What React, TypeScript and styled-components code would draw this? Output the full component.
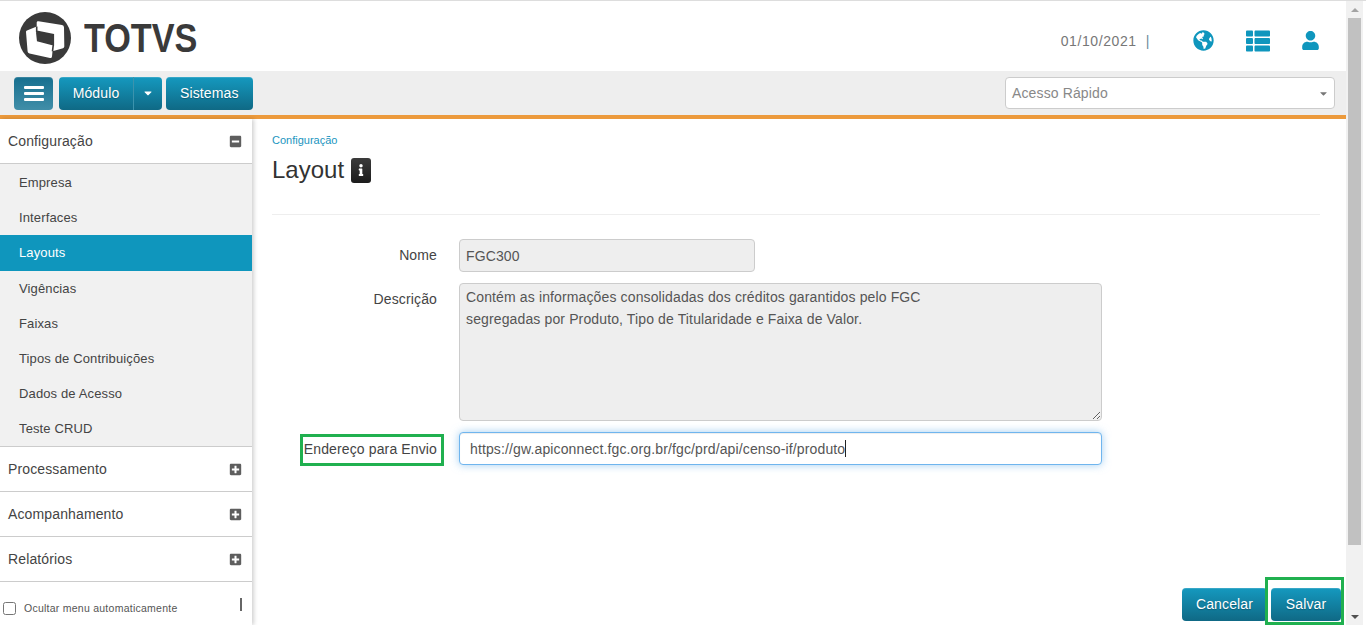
import * as React from 'react';
import styled, { createGlobalStyle } from 'styled-components';
import { FaGlobeAmericas, FaThList, FaUser, FaInfo, FaPlusSquare, FaMinusSquare, FaCaretDown } from 'react-icons/fa';

const GlobalStyle = createGlobalStyle`
  html, body {
    margin: 0;
    padding: 0;
    height: 100%;
    overflow: hidden;
    background: #fff;
  }
  * { box-sizing: border-box; }
  body {
    font-family: "Liberation Sans", Arial, sans-serif;
    font-size: 14px;
    letter-spacing: 0.13px;
    color: #333;
  }
`;

const Page = styled.div`
  display: flex;
  height: 625px;
  width: 1366px;
  border-top: 1px solid #ddd;
  overflow: hidden;
`;

const Main = styled.div`
  flex: 0 0 1346px;
  display: flex;
  flex-direction: column;
  min-width: 0;
`;

const Header = styled.header`
  flex: 0 0 70px;
  display: flex;
  align-items: center;
  justify-content: space-between;
  padding: 4px 26px 0 19px;
  background: #fff;
`;

const Logo = styled.div`
  display: flex;
  align-items: center;
  gap: 13px;
`;

const LogoText = styled.span`
  display: inline-block;
  width: 114px;
  font-size: 40px;
  line-height: 40px;
  font-weight: 700;
  letter-spacing: 0;
  color: #3a3a3a;
  transform: scaleX(0.855);
  transform-origin: left center;
  white-space: nowrap;
`;

const HeaderRight = styled.div`
  display: flex;
  align-items: center;
  margin-top: 5px;
`;

const DateText = styled.span`
  font-size: 14px;
  color: #777;
  letter-spacing: 0.6px;
  margin-right: 43px;

  &::after {
    content: '|';
    margin-left: 9px;
    color: #6d8a99;
  }
`;

const IconLink = styled.span`
  display: flex;
  color: #0f96bd;
  margin-left: ${(p: { $gap?: number }) => p.$gap ?? 0}px;
`;

const Toolbar = styled.div`
  flex: 0 0 44px;
  display: flex;
  align-items: center;
  justify-content: space-between;
  padding: 0 11px 0 14px;
  background: #eee;
`;

const ToolGroup = styled.div`
  display: flex;
  gap: 4px;
`;

const Button = styled.button`
  height: 33px;
  padding: 0 14px;
  border: 0;
  border-radius: 4px;
  font-family: inherit;
  font-size: 14px;
  letter-spacing: inherit;
  color: #fff;
  text-shadow: 0 1px 1px rgba(0, 0, 0, 0.25);
  background: linear-gradient(to bottom, #1599bf, #0f6985);
  box-shadow: inset 0 1px 0 rgba(255, 255, 255, 0.15);
`;

const MenuButton = styled(Button)`
  width: 39px;
  padding: 0;
  margin-right: 2px;
  display: flex;
  flex-direction: column;
  align-items: center;
  justify-content: center;
  gap: 3px;
  background: linear-gradient(to bottom, #166f8f, #418ea8);

  span {
    width: 20px;
    height: 3px;
    border-radius: 1px;
    background: #fff;
  }
`;

const SplitButton = styled.div`
  display: flex;
  border-radius: 4px;
  overflow: hidden;
`;

const SplitMain = styled(Button)`
  width: 75px;
  padding: 0;
  border-radius: 0;
  border-right: 1px solid #3c93ad;
`;

const SplitCaret = styled(Button)`
  width: 28px;
  padding: 0;
  border-radius: 0;
  display: flex;
  align-items: center;
  justify-content: center;
`;

const QuickAccess = styled.div`
  width: 330px;
  height: 32px;
  display: flex;
  align-items: center;
  justify-content: space-between;
  padding: 0 5px 0 6px;
  border: 1px solid #ccc;
  border-radius: 4px;
  background: #fff;
  color: #888;
  font-size: 14px;

  svg { color: #777; }
`;

const OrangeBar = styled.div`
  flex: 0 0 4px;
  background: #ec9a3c;
`;

const Body = styled.div`
  flex: 1;
  display: flex;
  min-height: 0;
`;

const Sidebar = styled.aside`
  flex: 0 0 252px;
  display: flex;
  flex-direction: column;
  background: #fff;
  box-shadow: 2px 0 4px rgba(0, 0, 0, 0.18);
  z-index: 1;
`;

const SectionHeader = styled.div`
  flex: 0 0 45px;
  display: flex;
  align-items: center;
  justify-content: space-between;
  padding: 0 10px 0 8px;
  border-bottom: 1px solid #ccc;
  font-size: 14px;
  color: #444;

  svg { color: #5e5e5e; }
`;

const SubList = styled.div`
  flex: 0 0 283px;
  display: flex;
  flex-direction: column;
  background: #f1f1f1;
  padding-top: 1.2px;
  border-bottom: 1px solid #ccc;
`;

const SubItem = styled.div<{ $active?: boolean }>`
  flex: 0 0 35.12px;
  display: flex;
  align-items: center;
  padding-left: 19px;
  font-size: 13px;
  color: ${(p) => (p.$active ? '#fff' : '#444')};
  background: ${(p) => (p.$active ? '#0f96bd' : 'transparent')};
`;

const SidebarFooter = styled.label`
  flex: 1;
  display: flex;
  align-items: center;
  padding: 9px 10px 0 3px;
  font-size: 10.5px;
  color: #555;
  letter-spacing: 0.25px;
`;

const AutoHideBox = styled.input`
  width: 13px;
  height: 13px;
  margin: 0 8px 0 0;
`;

const PinMark = styled.span`
  width: 2px;
  height: 13px;
  margin: -8px 0 0 auto;
  background: #666;
`;

const Content = styled.main`
  flex: 1;
  display: flex;
  flex-direction: column;
  padding: 14px 5px 4px 20px;
  min-width: 0;
`;

const Breadcrumb = styled.div`
  font-size: 11px;
  line-height: 14px;
  letter-spacing: 0;
  color: #1b95c0;
`;

const TitleRow = styled.div`
  display: flex;
  align-items: center;
  gap: 7px;
  margin-top: 8px;
`;

const Title = styled.h1`
  margin: 0;
  font-size: 24px;
  line-height: 30px;
  font-weight: 400;
  letter-spacing: 0;
  color: #333;
`;

const InfoBadge = styled.span`
  width: 20px;
  height: 25px;
  display: flex;
  align-items: center;
  justify-content: center;
  border-radius: 3px;
  color: #fff;
  background: linear-gradient(to bottom, #3b3b3b, #1c1c1c);
`;

const Divider = styled.hr`
  width: 1048px;
  margin: 29px 0 24px;
  border: 0;
  border-top: 1px solid #eee;
`;

const Form = styled.form`
  display: grid;
  grid-template-columns: 165px 643px;
  column-gap: 22px;
  row-gap: 11px;
`;

const FieldLabel = styled.label`
  text-align: right;
  font-size: 14px;
  line-height: 33px;
  color: #444;
`;

const MarkedLabel = styled(FieldLabel)`
  line-height: 35px;
`;

const Highlight = styled.span`
  position: relative;
  display: inline-block;

  &::after {
    content: '';
    position: absolute;
    border: 3px solid #20b04f;
    pointer-events: none;
  }
`;

const LabelHighlight = styled(Highlight)`
  &::after {
    inset: 2px -7px 1px -4px;
  }
`;

const fieldBase = `
  font-family: inherit;
  font-size: 14px;
  letter-spacing: inherit;
  color: #555;
  border-radius: 4px;
  border: 1px solid #ccc;
`;

const ReadOnlyInput = styled.input`
  ${fieldBase}
  width: 296px;
  height: 33px;
  padding: 0 6px;
  background: #eee;
`;

const ReadOnlyArea = styled.textarea`
  ${fieldBase}
  display: block;
  width: 643px;
  height: 138px;
  padding: 2px 6px;
  line-height: 22px;
  background: #eee;
  resize: both;
`;

const FocusedField = styled.div`
  ${fieldBase}
  width: 643px;
  height: 33px;
  display: flex;
  align-items: center;
  padding: 0 10px;
  border-color: #6fb5ee;
  box-shadow: inset 0 1px 1px rgba(0, 0, 0, 0.075), 0 0 8px rgba(102, 175, 233, 0.6);
  background: #fff;

  &::after {
    content: '';
    width: 1px;
    height: 17px;
    background: #222;
  }
`;

const Footer = styled.div`
  margin-top: auto;
  display: flex;
  justify-content: flex-end;
  gap: 4px;
`;

const FooterButton = styled(Button)<{ $width: number }>`
  width: ${(p) => p.$width}px;
  padding: 0 0 2px;
`;

const SaveHighlight = styled(Highlight)`
  display: flex;

  &::after {
    inset: -11px -3px -4px -6px;
  }
`;

const ScrollTrack = styled.div`
  flex: 0 0 17px;
  display: flex;
  flex-direction: column;
  align-items: center;
  background: #f1f1f1;
  margin-right: 3px;
`;

const Arrow = styled.span<{ $down?: boolean }>`
  flex: 0 0 17px;
  display: flex;
  align-items: center;
  justify-content: center;

  &::before {
    content: '';
    border-left: 4px solid transparent;
    border-right: 4px solid transparent;
    ${(p) => (p.$down ? 'border-top: 4px solid #505050;' : 'border-bottom: 4px solid #a3a3a3;')}
  }
`;

const Thumb = styled.div`
  width: 13px;
  height: 527px;
  background: #c1c1c1;
`;

const ScrollGap = styled.div`
  flex: 1;
`;

const LogoMark = () => (
  <svg width="52" height="52" viewBox="0 0 52 52" aria-hidden="true">
    <circle cx="26" cy="26" r="26" fill="#3a3a3a" />
    <path d="M8 18.5 L17.7 14.5 L17.7 10.5 Q17.7 9 19.5 9.3 L43 13 Q45 13.4 45 15.5 L45.3 34.5 Q45.3 35.8 44 36.2 L33.5 39.3 L33 44.5 Q32.8 46.3 31 46 L10.5 41.6 Q8.8 41.2 8.6 39.5 L7 20 Q6.9 18.9 8 18.5 Z" fill="#fff" />
    <path d="M17.7 14.5 L17.7 19.3 L34.3 22.7 L34.3 32.7 L18.7 28.7 L17.7 19.3 M34.3 32.7 L33.5 39.3" fill="#3a3a3a" stroke="#3a3a3a" strokeWidth="1.6" />
  </svg>
);

const sections = ['Processamento', 'Acompanhamento', 'Relatórios'];
const items = ['Empresa', 'Interfaces', 'Layouts', 'Vigências', 'Faixas', 'Tipos de Contribuições', 'Dados de Acesso', 'Teste CRUD'];

const description =
  'Contém as informações consolidadas dos créditos garantidos pelo FGC\nsegregadas por Produto, Tipo de Titularidade e Faixa de Valor.';

export default function App() {
  return (
    <>
      <GlobalStyle />
      <Page>
        <Main>
          <Header>
            <Logo>
              <LogoMark />
              <LogoText>TOTVS</LogoText>
            </Logo>
            <HeaderRight>
              <DateText>01/10/2021</DateText>
              <IconLink><FaGlobeAmericas size={21} /></IconLink>
              <IconLink $gap={32}><FaThList size={24} /></IconLink>
              <IconLink $gap={31}><FaUser size={19} /></IconLink>
            </HeaderRight>
          </Header>
          <Toolbar>
            <ToolGroup>
              <MenuButton aria-label="Menu"><span /><span /><span /></MenuButton>
              <SplitButton>
                <SplitMain>Módulo</SplitMain>
                <SplitCaret aria-label="Abrir"><FaCaretDown size={12} /></SplitCaret>
              </SplitButton>
              <Button>Sistemas</Button>
            </ToolGroup>
            <QuickAccess>
              Acesso Rápido
              <FaCaretDown size={11} />
            </QuickAccess>
          </Toolbar>
          <OrangeBar />
          <Body>
            <Sidebar>
              <SectionHeader>
                Configuração
                <FaMinusSquare size={13} />
              </SectionHeader>
              <SubList>
                {items.map((item) => (
                  <SubItem key={item} $active={item === 'Layouts'}>{item}</SubItem>
                ))}
              </SubList>
              {sections.map((section) => (
                <SectionHeader key={section}>
                  {section}
                  <FaPlusSquare size={13} />
                </SectionHeader>
              ))}
              <SidebarFooter>
                <AutoHideBox type="checkbox" />
                Ocultar menu automaticamente
                <PinMark />
              </SidebarFooter>
            </Sidebar>
            <Content>
              <Breadcrumb>Configuração</Breadcrumb>
              <TitleRow>
                <Title>Layout</Title>
                <InfoBadge><FaInfo size={12} /></InfoBadge>
              </TitleRow>
              <Divider />
              <Form>
                <FieldLabel>Nome</FieldLabel>
                <div><ReadOnlyInput readOnly value="FGC300" /></div>
                <FieldLabel>Descrição</FieldLabel>
                <ReadOnlyArea readOnly value={description} />
                <MarkedLabel>
                  <LabelHighlight>Endereço para Envio</LabelHighlight>
                </MarkedLabel>
                <FocusedField>https://gw.apiconnect.fgc.org.br/fgc/prd/api/censo-if/produto</FocusedField>
              </Form>
              <Footer>
                <FooterButton $width={85}>Cancelar</FooterButton>
                <SaveHighlight><FooterButton $width={70}>Salvar</FooterButton></SaveHighlight>
              </Footer>
            </Content>
          </Body>
        </Main>
        <ScrollTrack>
          <Arrow />
          <Thumb />
          <ScrollGap />
          <Arrow $down />
        </ScrollTrack>
      </Page>
    </>
  );
}
